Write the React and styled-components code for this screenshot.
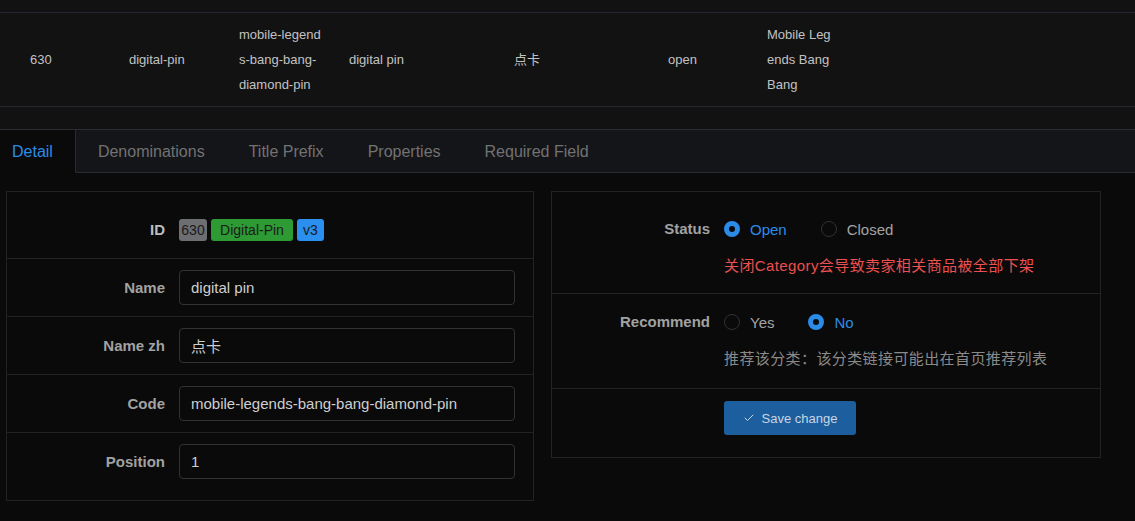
import styled, { createGlobalStyle } from "styled-components";

const GlobalStyle = createGlobalStyle`
  html, body {
    margin: 0;
    padding: 0;
    background: #0a0a0a;
  }
  body {
    font-family: "Liberation Sans", "Noto Sans CJK SC", sans-serif;
    color: #c4c4c4;
  }
`;

const Page = styled.div`
  width: 1135px;
  height: 521px;
  overflow: hidden;
  background: #0a0a0a;
`;

const TableBlock = styled.div`
  background: #121212;
  padding: 12px 0 22px;
`;

const Row = styled.div`
  display: flex;
  align-items: center;
  height: 93px;
  padding-left: 20px;
  border-top: 1px solid #23262c;
  border-bottom: 1px solid #23262c;
  font-size: 13px;
  line-height: 25px;
  color: #c2c2c2;
`;

const Cell = styled.div`
  box-sizing: border-box;
  flex: none;
  width: ${(p) => p.$w}px;
  padding: 0 ${(p) => p.$pr || 10}px 0 10px;
  word-break: break-all;
`;

const TabBar = styled.div`
  display: flex;
  height: 43px;
  background: #141519;
  border-top: 1px solid #2a2c31;
  margin-left: -10px;
`;

const Tab = styled.div`
  display: flex;
  align-items: center;
  padding: 2px 22px 0;
  font-size: 16px;
  color: ${(p) => (p.$active ? "#2b8ce8" : "#727272")};
  background: ${(p) => (p.$active ? "#0a0a0a" : "transparent")};
  border-right: ${(p) => (p.$active ? "1px solid #2a2c31" : "none")};
  border-bottom: ${(p) => (p.$active ? "1px solid #0a0a0a" : "1px solid #2a2c31")};
`;

const TabFill = styled.div`
  flex: 1;
  border-bottom: 1px solid #2a2c31;
`;

const Panels = styled.div`
  display: grid;
  grid-template-columns: 528px 550px;
  column-gap: 17px;
  align-items: start;
  padding: 18px 0 0 6px;
`;

const Panel = styled.div`
  box-sizing: border-box;
  border: 1px solid #232323;
  padding: 9px 0 10px;
`;

const FormRow = styled.div`
  display: grid;
  grid-template-columns: 158px 1fr;
  column-gap: 14px;
  align-items: ${(p) => (p.$top ? "start" : "center")};
  padding: ${(p) => p.$pad || "11px 18px 11px 0"};
  min-height: ${(p) => (p.$top ? 0 : 35)}px;
  border-bottom: ${(p) => (p.$last ? "none" : "1px solid #232323")};
`;

const Label = styled.div`
  text-align: right;
  font-size: 15px;
  font-weight: bold;
  line-height: 20px;
  color: ${(p) => (p.$bright ? "#bdbdbd" : "#a2a2a2")};
`;

const Badges = styled.div`
  display: flex;
  gap: 4px;
`;

const Badge = styled.span`
  display: inline-block;
  width: ${(p) => p.$w}px;
  height: 22px;
  line-height: 22px;
  text-align: center;
  border-radius: 3px;
  font-size: 14px;
  color: #1a1a1a;
  background: ${(p) => p.$bg};
`;

const Input = styled.input`
  box-sizing: border-box;
  width: 100%;
  height: 35px;
  padding: 0 11px;
  border: 1px solid #303236;
  border-radius: 4px;
  background: #0a0a0a;
  color: #cfcfcf;
  font-family: "Liberation Sans", "Noto Sans CJK SC", sans-serif;
  font-size: 15px;
  outline: none;
`;

const RadioGroup = styled.div`
  display: flex;
  align-items: center;
  height: 20px;
`;

const RadioOption = styled.label`
  display: flex;
  align-items: center;
  gap: 10px;
  margin-right: 34px;
  font-size: 15px;
  color: ${(p) => (p.$checked ? "#2b8ce8" : "#a4a4a4")};
`;

const RadioDot = styled.span`
  box-sizing: border-box;
  width: 16px;
  height: 16px;
  border-radius: 50%;
  border: ${(p) => (p.$checked ? "5px solid #2b8ce8" : "1px solid #303236")};
  background: #0a0a0a;
`;

const Note = styled.div`
  margin-top: 17px;
  font-size: 15px;
  line-height: 20px;
  letter-spacing: 0.4px;
  color: ${(p) => (p.$warn ? "#ec5050" : "#8a8a8a")};
`;

const SaveButton = styled.button`
  display: flex;
  align-items: center;
  justify-content: center;
  gap: 7px;
  width: 132px;
  height: 34px;
  border: none;
  border-radius: 3px;
  background: #1d5e9e;
  color: #c9d5e2;
  font-family: "Liberation Sans", sans-serif;
  font-size: 13px;
`;

const Radio = ({ checked, children }) => (
  <RadioOption $checked={checked}>
    <RadioDot $checked={checked} />
    {children}
  </RadioOption>
);

const tabs = ["Detail", "Denominations", "Title Prefix", "Properties", "Required Field"];

export default function App() {
  return (
    <Page>
      <GlobalStyle />
      <TableBlock>
        <Row>
          <Cell $w={99}>630</Cell>
          <Cell $w={110}>digital-pin</Cell>
          <Cell $w={110} $pr={17}>mobile-legends-bang-bang-diamond-pin</Cell>
          <Cell $w={165}>digital pin</Cell>
          <Cell $w={154}>点卡</Cell>
          <Cell $w={99}>open</Cell>
          <Cell $w={86}>Mobile Legends Bang Bang</Cell>
        </Row>
      </TableBlock>

      <TabBar>
        {tabs.map((t, i) => (
          <Tab key={t} $active={i === 0}>
            {t}
          </Tab>
        ))}
        <TabFill />
      </TabBar>

      <Panels>
        <Panel>
          <FormRow>
            <Label $bright>ID</Label>
            <Badges>
              <Badge $w={28} $bg="#6c6e72">630</Badge>
              <Badge $w={82} $bg="#2d9a34">Digital-Pin</Badge>
              <Badge $w={27} $bg="#2b8ff0">v3</Badge>
            </Badges>
          </FormRow>
          <FormRow>
            <Label>Name</Label>
            <Input defaultValue="digital pin" />
          </FormRow>
          <FormRow>
            <Label>Name zh</Label>
            <Input defaultValue="点卡" />
          </FormRow>
          <FormRow>
            <Label>Code</Label>
            <Input defaultValue="mobile-legends-bang-bang-diamond-pin" />
          </FormRow>
          <FormRow $last>
            <Label>Position</Label>
            <Input defaultValue="1" />
          </FormRow>
        </Panel>

        <Panel>
          <FormRow $top $pad="18px 0 17px">
            <Label>Status</Label>
            <div>
              <RadioGroup>
                <Radio checked>Open</Radio>
                <Radio>Closed</Radio>
              </RadioGroup>
              <Note $warn>关闭Category会导致卖家相关商品被全部下架</Note>
            </div>
          </FormRow>
          <FormRow $top $pad="18px 0 19px">
            <Label>Recommend</Label>
            <div>
              <RadioGroup>
                <Radio>Yes</Radio>
                <Radio checked>No</Radio>
              </RadioGroup>
              <Note>推荐该分类：该分类链接可能出在首页推荐列表</Note>
            </div>
          </FormRow>
          <FormRow $top $last $pad="12px 0">
            <div />
            <SaveButton>
              <svg width="12" height="12" viewBox="0 0 24 24" fill="none" stroke="currentColor" strokeWidth="2" strokeLinecap="round" strokeLinejoin="round">
                <path d="M20 6 9 17l-5-5" />
              </svg>
              Save change
            </SaveButton>
          </FormRow>
        </Panel>
      </Panels>
    </Page>
  );
}
